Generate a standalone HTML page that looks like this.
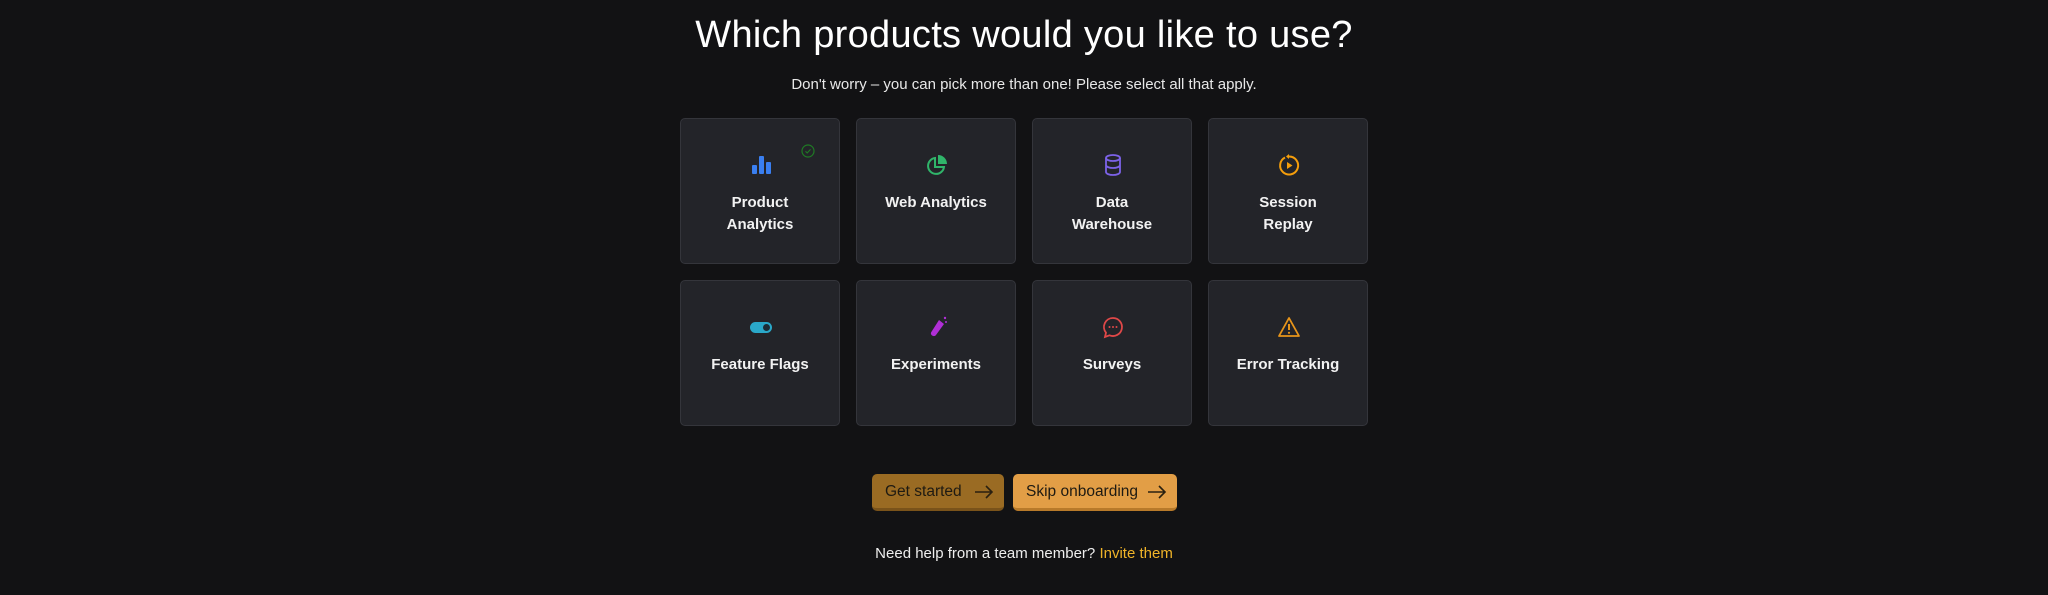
<!DOCTYPE html>
<html><head><meta charset="utf-8"><style>
*{box-sizing:border-box;margin:0;padding:0}
body{width:2048px;height:595px;background:#121214;font-family:"Liberation Sans",sans-serif;color:#fff;position:relative;overflow:hidden}
h1{position:absolute;top:14px;left:0;width:2048px;text-align:center;font-size:38px;font-weight:400;letter-spacing:0.3px}
.sub{position:absolute;top:76px;width:2048px;text-align:center;font-size:15px;color:#e8e8e8}
.card{position:absolute;width:160px;height:146px;background:#232429;border:1px solid #34353b;border-radius:5px;text-align:center}
.card svg{position:absolute;left:68px;top:34px}
.card .l{position:absolute;top:73px;left:0;width:100%;font-weight:700;font-size:15px;line-height:22px;color:#f2f2f2}
.btn{position:absolute;top:474px;height:37px;border-radius:5px;font-size:15.5px;color:#1e1a12;padding-left:13px;line-height:36px}
.btn svg{position:absolute;right:10px;top:10px}
.foot{position:absolute;top:545px;width:2048px;text-align:center;font-size:15px;color:#eee}
.foot span{color:#f0b429}
</style></head><body>
<h1>Which products would you like to use?</h1>
<div class="sub">Don't worry – you can pick more than one! Please select all that apply.</div>

<div class="card" style="left:680px;top:118px">
<svg width="24" height="24" viewBox="0 0 24 24"><rect x="3" y="12" width="5" height="9" rx="1" fill="#3a7ff0"/><rect x="10" y="3" width="5" height="18" rx="1" fill="#3a7ff0"/><rect x="17" y="9" width="5" height="12" rx="1" fill="#3a7ff0"/></svg>
<svg style="left:120px;top:25px" width="14" height="14" viewBox="0 0 14 14"><circle cx="7" cy="7" r="6" fill="none" stroke="#1f7a24" stroke-width="1.2"/><path d="M4.5 7.3l1.7 1.7 3.3-3.6" fill="none" stroke="#1f7a24" stroke-width="1.1"/></svg>
<div class="l">Product<br>Analytics</div></div>
<div class="card" style="left:856px;top:118px">
<svg width="24" height="24" viewBox="0 0 24 24"><path d="M10 5a8 8 0 1 0 9 9h-9z" fill="none" stroke="#30b56a" stroke-width="2"/><path d="M13 2a9 9 0 0 1 9 9h-9z" fill="#30b56a"/></svg>
<div class="l">Web Analytics</div></div>
<div class="card" style="left:1032px;top:118px">
<svg width="24" height="24" viewBox="0 0 24 24"><ellipse cx="12" cy="5" rx="7" ry="3" fill="none" stroke="#7c62e8" stroke-width="1.8"/><path d="M5 5v14c0 1.7 3.1 3 7 3s7-1.3 7-3V5M5 12c0 1.7 3.1 3 7 3s7-1.3 7-3" fill="none" stroke="#7c62e8" stroke-width="1.8"/></svg>
<div class="l">Data<br>Warehouse</div></div>
<div class="card" style="left:1208px;top:118px">
<svg width="24" height="24" viewBox="0 0 24 24"><path d="M8 4.5A9 9 0 1 0 12 3.5" fill="none" stroke="#f59e0b" stroke-width="2"/><path d="M12 1l-3 2.5 3 2.5z" fill="#f59e0b"/><path d="M10 9v7l5.5-3.5z" fill="#f59e0b"/></svg>
<div class="l">Session<br>Replay</div></div>

<div class="card" style="left:680px;top:280px">
<svg width="24" height="24" viewBox="0 0 24 24"><rect x="1" y="7" width="22" height="11" rx="5.5" fill="#2aa8c9"/><circle cx="17.5" cy="12.5" r="3.5" fill="#1d2c36"/></svg>
<div class="l">Feature Flags</div></div>
<div class="card" style="left:856px;top:280px">
<svg width="24" height="24" viewBox="0 0 24 24"><path d="M14 5l5 4-8 11c-1.5 2-4.5 1-5-1-0.3-0.8 0-1.6 0.5-2.3z" fill="#b02fd6"/><circle cx="20" cy="3" r="1.2" fill="#b02fd6"/><circle cx="21" cy="7" r="1" fill="#b02fd6"/></svg>
<div class="l">Experiments</div></div>
<div class="card" style="left:1032px;top:280px">
<svg width="24" height="24" viewBox="0 0 24 24"><path d="M12 3a9 9 0 1 1-3.5 17.3L4 22l1-4.3A9 9 0 0 1 12 3z" fill="none" stroke="#e04848" stroke-width="1.8"/><circle cx="8.5" cy="12" r="1" fill="#e04848"/><circle cx="12" cy="12" r="1" fill="#e04848"/><circle cx="15.5" cy="12" r="1" fill="#e04848"/></svg>
<div class="l">Surveys</div></div>
<div class="card" style="left:1208px;top:280px">
<svg width="24" height="24" viewBox="0 0 24 24"><path d="M12 3L2 21h20z" fill="none" stroke="#e8951a" stroke-width="1.8" stroke-linejoin="round"/><path d="M12 9v6" stroke="#e8951a" stroke-width="2"/><circle cx="12" cy="17.8" r="1.1" fill="#e8951a"/></svg>
<div class="l">Error Tracking</div></div>

<div class="btn" style="left:872px;width:132px;background:#9a6b23;border-bottom:3px solid #7a531a">Get started
<svg width="20" height="16" viewBox="0 0 20 16"><path d="M1 8h17M12 2l6 6-6 6" fill="none" stroke="#2a2010" stroke-width="1.6"/></svg></div>
<div class="btn" style="left:1013px;width:164px;background:#e29e46;border-bottom:3px solid #b87a2a">Skip onboarding
<svg width="20" height="16" viewBox="0 0 20 16"><path d="M1 8h17M12 2l6 6-6 6" fill="none" stroke="#2a2010" stroke-width="1.6"/></svg></div>

<div class="foot">Need help from a team member? <span>Invite them</span></div>
</body></html>
